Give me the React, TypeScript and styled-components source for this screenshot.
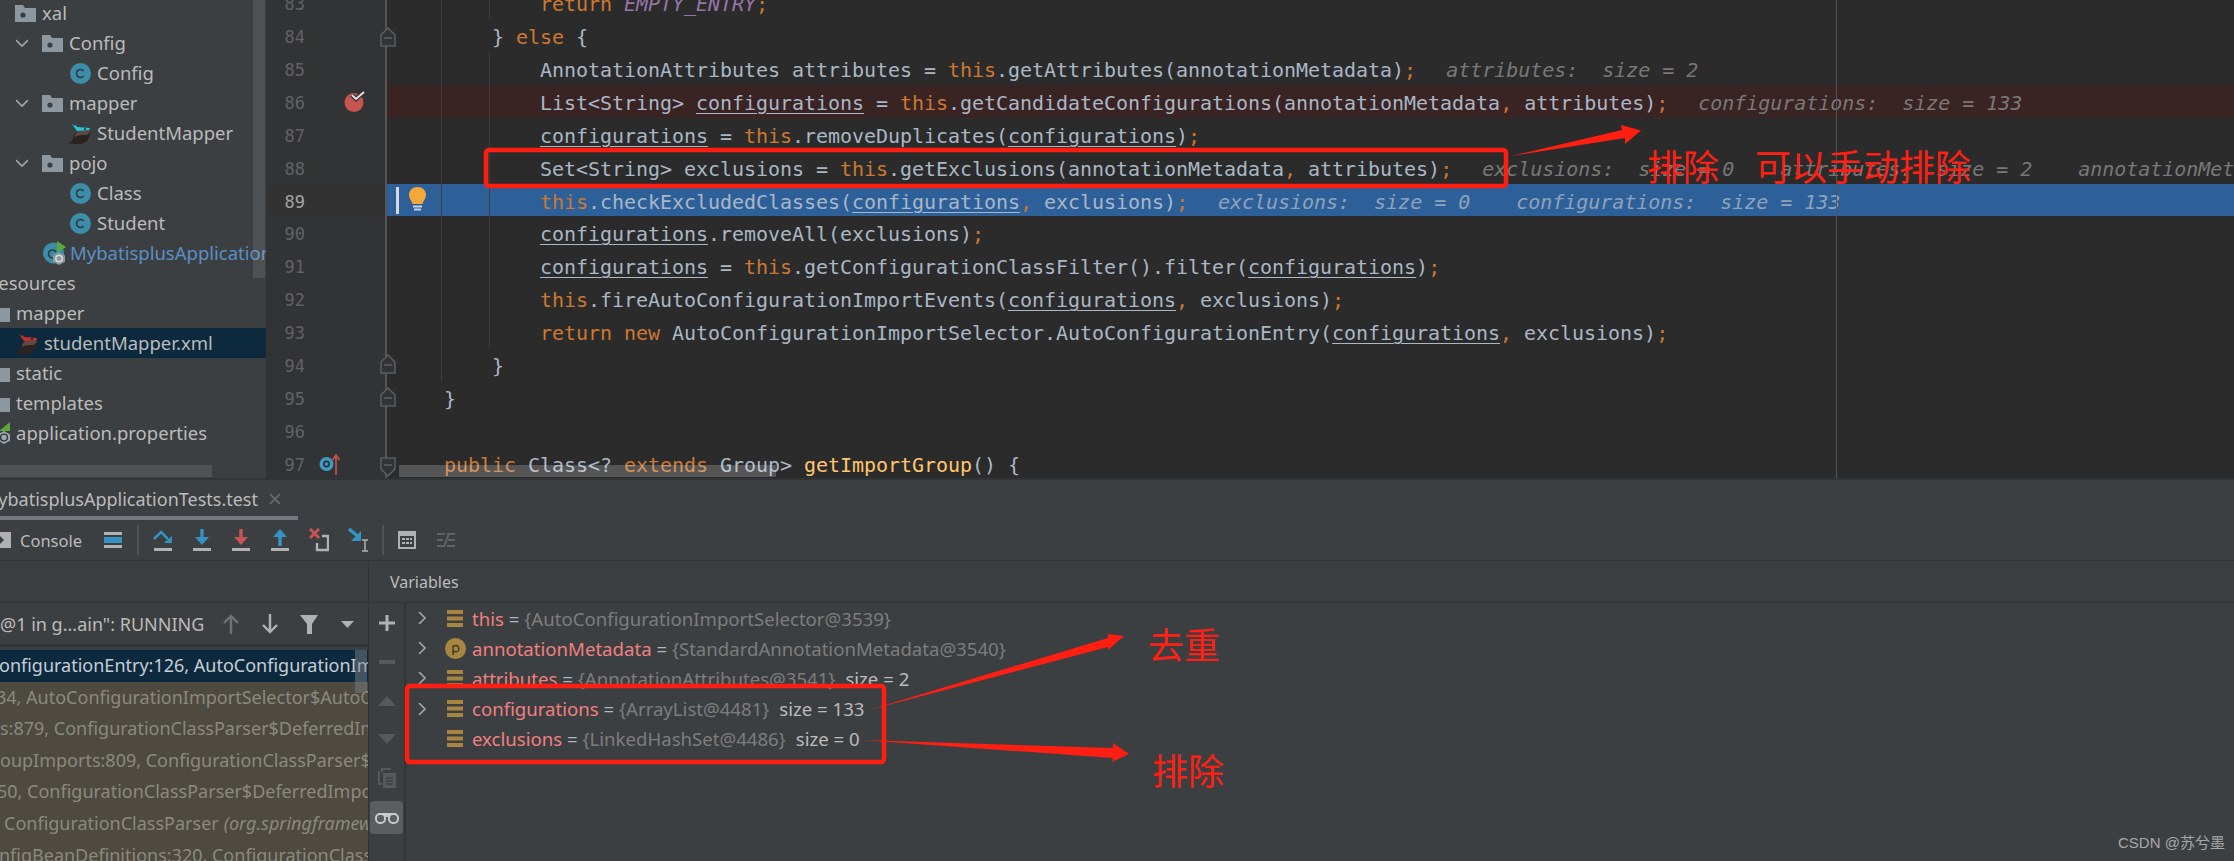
import type { ReactNode } from "react";
import styled, { createGlobalStyle } from "styled-components";

const GlobalStyle = createGlobalStyle`
  html, body {
    margin: 0;
    padding: 0;
    background: #3c3f41;
  }
`;

const UI_FONT = `"Noto Sans", "Noto Sans CJK SC", sans-serif`;
const MONO_FONT = `"DejaVu Sans Mono", "Liberation Mono", monospace`;

const Page = styled.div`
  position: relative;
  width: 2234px;
  height: 861px;
  overflow: hidden;
  display: flex;
  flex-direction: column;
  background: #3c3f41;
  font-family: ${UI_FONT};
`;

const Top = styled.div`
  height: 478px;
  flex: none;
  display: flex;
  overflow: hidden;
`;

/* project tree */
const Sidebar = styled.div`
  position: relative;
  width: 266px;
  flex: none;
  overflow: hidden;
  background: #3c3f41;
`;

const TreeList = styled.div`
  margin-top: -2px;
`;

const TreeRow = styled.div<{ $indent: number; $selected?: boolean }>`
  height: 30px;
  display: flex;
  align-items: center;
  padding-left: ${({ $indent }) => Math.max($indent, 0)}px;
  background: ${({ $selected }) => ($selected ? "#0d293e" : "transparent")};
  white-space: nowrap;
  & > :first-child {
    margin-left: ${({ $indent }) => Math.min($indent, 0)}px;
  }
`;

const ChevronGap = styled.span`
  width: 14px;
  flex: none;
`;

const TreeLabel = styled.span<{ $link?: boolean; $gap?: number }>`
  margin-left: ${({ $gap }) => $gap ?? 6}px;
  font-size: 18.5px;
  line-height: 30px;
  color: ${({ $link }) => ($link ? "#5b8fc4" : "#bbbbbb")};
`;

const VScroll = styled.div`
  position: absolute;
  top: 0;
  right: 1px;
  width: 12px;
  height: 278px;
  background: rgba(255, 255, 255, 0.1);
`;

const HScroll = styled.div`
  position: absolute;
  left: 0;
  top: 465px;
  width: 212px;
  height: 12px;
  background: #505355;
`;

/* editor */
const Editor = styled.div`
  position: relative;
  flex: 1;
  overflow: hidden;
  background: #2b2b2b;
`;

const Lines = styled.div`
  margin-top: -14px;
`;

const Line = styled.div<{ $bg?: string }>`
  height: 32.93px;
  display: flex;
  background: ${({ $bg }) => $bg ?? "transparent"};
`;

const GutterCell = styled.div<{ $current?: boolean }>`
  position: relative;
  width: 121px;
  flex: none;
  box-sizing: border-box;
  padding-right: 80px;
  text-align: right;
  font-family: ${MONO_FONT};
  font-size: 17px;
  line-height: 37px;
  color: ${({ $current }) => ($current ? "#a4a3a3" : "#606366")};
  background: ${({ $current }) => ($current ? "#323232" : "#313335")};
  border-right: 2px solid #555555;
`;

const GutterMark = styled.span<{ $left: number; $top?: number }>`
  position: absolute;
  left: ${({ $left }) => $left}px;
  top: ${({ $top }) => $top ?? 0}px;
  display: flex;
`;

const CodeCell = styled.div<{ $indent: number }>`
  position: relative;
  flex: 1;
  min-width: 0;
  height: 33px;
  padding-left: ${({ $indent }) => 57 + $indent}px;
  font-family: ${MONO_FONT};
  font-size: 20px;
  letter-spacing: -0.04px;
  line-height: 36px;
  white-space: pre;
  color: #a9b7c6;
`;

const Keyword = styled.span`
  color: #cc7832;
`;

const Punct = styled.span`
  color: #cc7832;
`;

const Reassigned = styled.span`
  text-decoration: underline;
  text-underline-offset: 3px;
  text-decoration-thickness: 1px;
`;

const Constant = styled.span`
  color: #9876aa;
  font-style: italic;
`;

const Method = styled.span`
  color: #ffc66d;
`;

const Hint = styled.span<{ $gap?: number; $tone?: string }>`
  margin-left: ${({ $gap }) => $gap ?? 30}px;
  font-style: italic;
  color: ${({ $tone }) => $tone ?? "#787878"};
`;

const Guide = styled.div<{ $left: number; $top: number; $height: number }>`
  position: absolute;
  left: ${({ $left }) => $left}px;
  top: ${({ $top }) => $top}px;
  width: 1px;
  height: ${({ $height }) => $height}px;
  background: #3b3b3b;
`;

const RightMargin = styled.div`
  position: absolute;
  left: 1570px;
  top: 0;
  bottom: 0;
  width: 1px;
  background: #555555;
`;

const CaretBar = styled.div`
  position: absolute;
  left: 9px;
  top: 3px;
  width: 3px;
  height: 27px;
  background: #d8d8d8;
`;

const EditorScroll = styled.div`
  position: absolute;
  left: 133px;
  top: 465px;
  width: 377px;
  height: 12px;
  background: rgba(255, 255, 255, 0.2);
`;

/* debugger */
const Debugger = styled.div`
  flex: 1;
  min-height: 0;
  display: flex;
  flex-direction: column;
  border-top: 2px solid #323537;
`;

const TabBar = styled.div`
  height: 40px;
  flex: none;
  display: flex;
`;

const Tab = styled.div`
  width: 298px;
  box-sizing: border-box;
  display: flex;
  justify-content: flex-end;
  align-items: center;
  gap: 11px;
  padding: 2px 17px 0 0;
  overflow: hidden;
  border-bottom: 4px solid #747a80;
  font-size: 18px;
  color: #bbbbbb;
  white-space: nowrap;
`;

const TabLabel = styled.span`
  flex: none;
`;

const ToolBar = styled.div`
  height: 41px;
  flex: none;
  display: flex;
  align-items: center;
  border-bottom: 1px solid #323537;
  box-sizing: border-box;
`;

const ConsoleLabel = styled.span`
  width: 64px;
  margin: 0 20px 0 9px;
  font-size: 16.5px;
  color: #bbbbbb;
`;

const ToolSep = styled.div<{ $before: number; $after: number }>`
  width: 2px;
  height: 30px;
  margin: 0 ${({ $after }) => $after}px 0 ${({ $before }) => $before}px;
  background: #505355;
`;

const ToolGroup = styled.div`
  display: flex;
  align-items: center;
  gap: 19px;
`;

const Panes = styled.div`
  flex: 1;
  min-height: 0;
  display: flex;
`;

const FramesPane = styled.div`
  width: 369px;
  flex: none;
  box-sizing: border-box;
  border-right: 1px solid #323537;
  display: flex;
  flex-direction: column;
  overflow: hidden;
`;

const PaneHeader = styled.div`
  height: 42px;
  flex: none;
  box-sizing: border-box;
  display: flex;
  align-items: center;
  padding-left: 21px;
  border-bottom: 1px solid #323537;
  font-size: 16px;
  color: #bbbbbb;
`;

const ThreadRow = styled.div`
  position: relative;
  height: 44px;
  flex: none;
  box-sizing: border-box;
  display: flex;
  align-items: center;
  border-bottom: 3px solid #323537;
  font-size: 18px;
  color: #bbbbbb;
  white-space: nowrap;
`;

const ThreadText = styled.span`
  width: 222px;
  flex: none;
  overflow: hidden;
`;

const ThreadIcons = styled.div`
  display: flex;
  align-items: center;
  gap: 21px;
`;

const FrameList = styled.div`
  position: relative;
  flex: 1;
  padding-top: 3px;
  overflow: hidden;
  background: #3c3f41;
`;

const FrameRow = styled.div<{ $selected?: boolean; $shift: number }>`
  height: 31.6px;
  padding-left: ${({ $shift }) => Math.max($shift, 0)}px;
  font-size: 18px;
  line-height: 31px;
  white-space: nowrap;
  overflow: hidden;
  background: ${({ $selected }) => ($selected ? "#0d293e" : "#4e4a3f")};
  color: ${({ $selected }) => ($selected ? "#c5ced6" : "#8b897f")};
  & > span {
    display: inline-block;
    margin-left: ${({ $shift }) => Math.min($shift, 0)}px;
  }
`;

const FrameNote = styled.i`
  margin-left: 5px;
`;

const FrameThumb = styled.div`
  position: absolute;
  right: 1px;
  top: 3px;
  width: 12px;
  height: 43px;
  background: rgba(120, 128, 134, 0.5);
`;

const VariablesPane = styled.div`
  flex: 1;
  min-width: 0;
  display: flex;
  flex-direction: column;
`;

const VariablesBody = styled.div`
  flex: 1;
  min-height: 0;
  display: flex;
`;

const SideBar = styled.div`
  width: 37px;
  flex: none;
  box-sizing: border-box;
  border-right: 2px solid #323537;
  display: flex;
  flex-direction: column;
  align-items: center;
`;

const SideSlot = styled.div<{ $height: number }>`
  height: ${({ $height }) => $height}px;
  display: flex;
  align-items: center;
  justify-content: center;
`;

const GlassesButton = styled.div`
  width: 33px;
  height: 33px;
  margin-top: 3px;
  border-radius: 4px;
  background: #5a5e61;
  display: flex;
  align-items: center;
  justify-content: center;
`;

const VarList = styled.div`
  flex: 1;
  min-width: 0;
`;

const VarRow = styled.div`
  height: 30.2px;
  display: flex;
  align-items: center;
  white-space: pre;
  font-size: 18.6px;
`;

const ChevronSlot = styled.span`
  width: 38px;
  flex: none;
  display: flex;
  padding-left: 10px;
  box-sizing: border-box;
`;

const VarIconSlot = styled.span`
  width: 22px;
  flex: none;
  margin-right: 6px;
  display: flex;
  justify-content: center;
`;

const VarName = styled.span`
  color: #f08080;
`;

const VarEq = styled.span`
  color: #a9b7c6;
`;

const VarValue = styled.span`
  color: #7d7d7d;
`;

const VarSize = styled.span`
  margin-left: 10px;
  color: #bbbbbb;
`;

/* red pen notes on top of the shot */
const Notes = styled.svg`
  position: absolute;
  left: 0;
  top: 0;
  pointer-events: none;
`;

const Note = styled.div<{ $left: number; $top: number }>`
  position: absolute;
  left: ${({ $left }) => $left}px;
  top: ${({ $top }) => $top}px;
  font-family: "Noto Sans CJK SC", sans-serif;
  font-size: 36px;
  line-height: 40px;
  white-space: pre;
  color: #ff2015;
`;

const Watermark = styled.div`
  position: absolute;
  left: 2118px;
  top: 833px;
  font-family: "Liberation Sans", "Noto Sans CJK SC", sans-serif;
  font-size: 15px;
  line-height: 20px;
  color: #a8a8a8;
  white-space: nowrap;
`;

/* icons */
const FolderIcon = () => (
  <svg width="21" height="17" viewBox="0 0 21 17" style={{ flex: "none" }}>
    <path d="M0 0h8l2 3h11v14H0z" fill="#9aa7b0" opacity="0.85" />
    <circle cx="8" cy="10" r="2.6" fill="#3c3f41" />
  </svg>
);

const ClassIcon = () => (
  <svg width="21" height="21" viewBox="0 0 21 21" style={{ flex: "none" }}>
    <circle cx="10.5" cy="10.5" r="10.5" fill="#3d8ca9" />
    <path d="M13.6 8a4 4 0 1 0 0 5" fill="none" stroke="#2b3b42" strokeWidth="1.6" />
  </svg>
);

const RunnableClassIcon = () => (
  <svg width="23" height="24" viewBox="0 0 23 24" style={{ flex: "none" }}>
    <circle cx="10.5" cy="12" r="10.5" fill="#3d8ca9" />
    <path d="M13 11a4 4 0 1 0 0 4" fill="none" stroke="#2b3b42" strokeWidth="1.6" />
    <path d="M14 0l9 6-9 6z" fill="#5aa83c" />
    <path d="M16 11l6 3.4v6.4L16 24l-6-3.2v-6.4z" fill="#8f9aa3" />
    <circle cx="16" cy="17.6" r="3.2" fill="none" stroke="#dfe3e6" strokeWidth="1.3" />
  </svg>
);

const PropertiesIcon = () => (
  <svg width="22" height="22" viewBox="-11 0 22 22" style={{ flex: "none" }}>
    <path d="M11 0v9H0z" fill="#5aa83c" />
    <path d="M5 9l6 3.4v6.4L5 22l-6-3.2v-6.4z" fill="#9aa7b0" />
    <circle cx="5" cy="15.5" r="3.4" fill="none" stroke="#33373a" strokeWidth="1.4" />
  </svg>
);

const BirdIcon = ({ accent }: { accent: string }) => (
  <svg width="23" height="21" viewBox="0 0 23 21" style={{ flex: "none" }}>
    <path d="M0 20c3-1 4-2 5-5 1-5 5-9 10-9h7c1 8-3 15-10 15-4 0-9 0-12-1z" fill="#2c2321" />
    <path d="M7 14c0-4 3-7 8-8h7c0 4-2 6-6 6-3 0-6 0-9 2z" fill="#5d4a46" />
    <path d="M4 1l3 2 1-1 1 2 13 1-1 2-12 1z" fill={accent} />
    <circle cx="17" cy="6" r="1" fill="#20282c" />
  </svg>
);

const Chevron = ({ open }: { open?: boolean }) => (
  <svg width="12" height="12" viewBox="0 0 12 12" style={{ flex: "none" }}>
    <path
      d={open ? "M0 3l6 6 6-6" : "M3 0l6 6-6 6"}
      fill="none"
      stroke="#a3a5a7"
      strokeWidth="1.6"
    />
  </svg>
);

const Breakpoint = () => (
  <svg width="21" height="21" viewBox="0 0 21 21">
    <circle cx="10" cy="11.5" r="9.5" fill="#c75450" />
    <path d="M8 4l4 4 8-7" fill="none" stroke="#2f3133" strokeWidth="4.5" />
    <path d="M8 4l4 4 8-7" fill="none" stroke="#dfe1e5" strokeWidth="2" />
  </svg>
);

const FoldOpen = () => (
  <svg width="16" height="20" viewBox="0 0 16 20">
    <path d="M1 8l7-7 7 7v11H1z" fill="#313335" stroke="#5a5d5f" strokeWidth="1.6" />
    <path d="M4 11h8" stroke="#5a5d5f" strokeWidth="1.6" />
  </svg>
);

const FoldClose = () => (
  <svg width="16" height="20" viewBox="0 0 16 20">
    <path d="M1 1h14v11l-7 7-7-7z" fill="#313335" stroke="#5a5d5f" strokeWidth="1.6" />
    <path d="M4 8h8" stroke="#5a5d5f" strokeWidth="1.6" />
  </svg>
);

const ImplementsMark = () => (
  <svg width="22" height="22" viewBox="0 0 22 22">
    <circle cx="7.5" cy="11" r="7" fill="#3d9ac0" />
    <circle cx="7.5" cy="11" r="2.6" fill="none" stroke="#26343b" strokeWidth="1.6" />
    <path d="M17 22V3M13.5 7L17 2l3.5 5" fill="none" stroke="#c75450" strokeWidth="1.6" />
  </svg>
);

const Bulb = () => (
  <svg width="17" height="25" viewBox="0 0 17 25">
    <path d="M8.5 0C3.5 0 0 3.4 0 8c0 3.5 2.6 5.4 3.5 9h10c.9-3.6 3.5-5.5 3.5-9 0-4.6-3.5-8-8.5-8z" fill="#f2a93a" />
    <path d="M4 19.5h9M5 22.5h7" stroke="#c9d2da" strokeWidth="1.8" />
  </svg>
);

const ToolIcon = ({ children, width = 20, dim }: { children: ReactNode; width?: number; dim?: boolean }) => (
  <svg width={width} height="24" viewBox={`0 0 ${width} 24`} style={{ flex: "none", opacity: dim ? 0.45 : 1 }}>
    {children}
  </svg>
);

const BLUE = "#3592c4";
const RED = "#c75450";
const GREY = "#afb1b3";

const DebugTools = () => (
  <ToolGroup>
    <ToolIcon>
      <path d="M1 11l7-7 7 7" fill="none" stroke={BLUE} strokeWidth="2.6" />
      <path d="M11 15l8-7v7z" fill={BLUE} />
      <rect x="1" y="20" width="18" height="3" fill={GREY} />
    </ToolIcon>
    <ToolIcon>
      <path d="M10 1v10" stroke={BLUE} strokeWidth="3.4" />
      <path d="M3 9h14l-7 8z" fill={BLUE} />
      <rect x="1" y="20" width="18" height="3" fill={GREY} />
    </ToolIcon>
    <ToolIcon>
      <path d="M10 1v10" stroke={RED} strokeWidth="3.4" />
      <path d="M3 9h14l-7 8z" fill={RED} />
      <rect x="1" y="20" width="18" height="3" fill={GREY} />
    </ToolIcon>
    <ToolIcon>
      <path d="M3 9l7-8 7 8z" fill={BLUE} />
      <path d="M10 8v10" stroke={BLUE} strokeWidth="3.4" />
      <rect x="1" y="20" width="18" height="3" fill={GREY} />
    </ToolIcon>
    <ToolIcon>
      <path d="M1 1l9 9M10 1l-9 9" stroke={RED} strokeWidth="3" />
      <path d="M13 8h6v14H8v-7" fill="none" stroke={GREY} strokeWidth="2.4" />
    </ToolIcon>
    <ToolIcon width={21}>
      <path d="M1 1l11 9" stroke={BLUE} strokeWidth="3.4" />
      <path d="M13 3v10H3z" fill={BLUE} />
      <path d="M14 12h6M14 23h6M17 12v11" stroke={GREY} strokeWidth="1.5" fill="none" />
    </ToolIcon>
  </ToolGroup>
);

const rows = [
  { n: 83, indent: 96, code: <><Keyword>return</Keyword> <Constant>EMPTY_ENTRY</Constant><Punct>;</Punct></> },
  { n: 84, indent: 48, code: <>{"} "}<Keyword>else</Keyword>{" {"}</>, mark: <GutterMark $left={114} $top={8}><FoldOpen /></GutterMark> },
  {
    n: 85,
    indent: 96,
    code: <>AnnotationAttributes attributes = <Keyword>this</Keyword>.getAttributes(annotationMetadata)<Punct>;</Punct><Hint>attributes:  size = 2</Hint></>,
  },
  {
    n: 86,
    indent: 96,
    bg: "#3a2323",
    mark: <GutterMark $left={78} $top={6}><Breakpoint /></GutterMark>,
    code: <>List&lt;String&gt; <Reassigned>configurations</Reassigned> = <Keyword>this</Keyword>.getCandidateConfigurations(annotationMetadata<Punct>,</Punct> attributes)<Punct>;</Punct><Hint>configurations:  size = 133</Hint></>,
  },
  {
    n: 87,
    indent: 96,
    code: <><Reassigned>configurations</Reassigned> = <Keyword>this</Keyword>.removeDuplicates(<Reassigned>configurations</Reassigned>)<Punct>;</Punct></>,
  },
  {
    n: 88,
    indent: 96,
    code: <>Set&lt;String&gt; exclusions = <Keyword>this</Keyword>.getExclusions(annotationMetadata<Punct>,</Punct> attributes)<Punct>;</Punct><Hint>exclusions:  size = 0</Hint><Hint $gap={46}>attributes:  size = 2</Hint><Hint $gap={46}>annotationMetadata: StandardAnnotationMetadata@3540</Hint></>,
  },
  {
    n: 89,
    indent: 96,
    bg: "#2d6099",
    current: true,
    code: <><Keyword>this</Keyword>.checkExcludedClasses(<Reassigned>configurations</Reassigned><Punct>,</Punct> exclusions)<Punct>;</Punct><Hint $tone="#8ea3bb">exclusions:  size = 0</Hint><Hint $gap={46} $tone="#8ea3bb">configurations:  size = 133</Hint></>,
  },
  { n: 90, indent: 96, code: <><Reassigned>configurations</Reassigned>.removeAll(exclusions)<Punct>;</Punct></> },
  {
    n: 91,
    indent: 96,
    code: <><Reassigned>configurations</Reassigned> = <Keyword>this</Keyword>.getConfigurationClassFilter().filter(<Reassigned>configurations</Reassigned>)<Punct>;</Punct></>,
  },
  {
    n: 92,
    indent: 96,
    code: <><Keyword>this</Keyword>.fireAutoConfigurationImportEvents(<Reassigned>configurations</Reassigned><Punct>,</Punct> exclusions)<Punct>;</Punct></>,
  },
  {
    n: 93,
    indent: 96,
    code: <><Keyword>return new</Keyword> AutoConfigurationImportSelector.AutoConfigurationEntry(<Reassigned>configurations</Reassigned><Punct>,</Punct> exclusions)<Punct>;</Punct></>,
  },
  { n: 94, indent: 48, code: <>{"}"}</>, mark: <GutterMark $left={114} $top={6}><FoldOpen /></GutterMark> },
  { n: 95, indent: 0, code: <>{"}"}</>, mark: <GutterMark $left={114} $top={6}><FoldOpen /></GutterMark> },
  { n: 96, indent: 0, code: <></> },
  {
    n: 97,
    indent: 0,
    mark: (
      <>
        <GutterMark $left={53} $top={6}><ImplementsMark /></GutterMark>
        <GutterMark $left={114} $top={10}><FoldClose /></GutterMark>
      </>
    ),
    code: <><Keyword>public</Keyword> Class&lt;? <Keyword>extends</Keyword> Group&gt; <Method>getImportGroup</Method>() {"{"}</>,
  },
];

const frames = [
  { text: "onfigurationEntry:126, AutoConfigurationImportSelector", shift: -1, selected: true },
  { text: "34, AutoConfigurationImportSelector$AutoConfigurationGroup", shift: -4 },
  { text: "s:879, ConfigurationClassParser$DeferredImportSelectorGrouping", shift: 0 },
  { text: "oupImports:809, ConfigurationClassParser$DeferredImportSelector", shift: 0 },
  { text: "50, ConfigurationClassParser$DeferredImportSelectorHandler", shift: -3 },
  { text: "ConfigurationClassParser", note: "(org.springframework.context)", shift: 4 },
  { text: "nfigBeanDefinitions:320, ConfigurationClassParser", shift: -1 },
];

const FieldIcon = () => (
  <svg width="16" height="17" viewBox="0 0 16 17">
    <path d="M0 0h16v4H0zM0 6.5h16v4H0zM0 13h16v4H0z" fill="#a9863f" />
  </svg>
);

const ParamIcon = () => (
  <svg width="21" height="21" viewBox="0 0 21 21">
    <circle cx="10.5" cy="10.5" r="10.5" fill="#a9863f" />
    <path d="M8 17V7.5M8 9a3.2 3.2 0 1 1 0 3.4" fill="none" stroke="#37322a" strokeWidth="1.3" />
  </svg>
);

const variables = [
  { name: "this", value: "{AutoConfigurationImportSelector@3539}", icon: <FieldIcon />, more: true },
  { name: "annotationMetadata", value: "{StandardAnnotationMetadata@3540}", icon: <ParamIcon />, more: true },
  { name: "attributes", value: "{AnnotationAttributes@3541}", size: "size = 2", icon: <FieldIcon />, more: true },
  { name: "configurations", value: "{ArrayList@4481}", size: "size = 133", icon: <FieldIcon />, more: true },
  { name: "exclusions", value: "{LinkedHashSet@4486}", size: "size = 0", icon: <FieldIcon /> },
];

export default function App() {
  return (
    <Page>
      <GlobalStyle />
      <Top>
        <Sidebar>
          <TreeList>
            <TreeRow $indent={15}><FolderIcon /><TreeLabel>xal</TreeLabel></TreeRow>
            <TreeRow $indent={16}><Chevron open /><ChevronGap /><FolderIcon /><TreeLabel>Config</TreeLabel></TreeRow>
            <TreeRow $indent={70}><ClassIcon /><TreeLabel>Config</TreeLabel></TreeRow>
            <TreeRow $indent={16}><Chevron open /><ChevronGap /><FolderIcon /><TreeLabel>mapper</TreeLabel></TreeRow>
            <TreeRow $indent={68}><BirdIcon accent="#25c8d8" /><TreeLabel>StudentMapper</TreeLabel></TreeRow>
            <TreeRow $indent={16}><Chevron open /><ChevronGap /><FolderIcon /><TreeLabel>pojo</TreeLabel></TreeRow>
            <TreeRow $indent={70}><ClassIcon /><TreeLabel>Class</TreeLabel></TreeRow>
            <TreeRow $indent={70}><ClassIcon /><TreeLabel>Student</TreeLabel></TreeRow>
            <TreeRow $indent={43}><RunnableClassIcon /><TreeLabel $link $gap={4}>MybatisplusApplicationTests</TreeLabel></TreeRow>
            <TreeRow $indent={-9}><TreeLabel $gap={0}>resources</TreeLabel></TreeRow>
            <TreeRow $indent={-11}><FolderIcon /><TreeLabel>mapper</TreeLabel></TreeRow>
            <TreeRow $indent={15} $selected><BirdIcon accent="#c9302c" /><TreeLabel>studentMapper.xml</TreeLabel></TreeRow>
            <TreeRow $indent={-11}><FolderIcon /><TreeLabel>static</TreeLabel></TreeRow>
            <TreeRow $indent={-11}><FolderIcon /><TreeLabel>templates</TreeLabel></TreeRow>
            <TreeRow $indent={-12}><PropertiesIcon /><TreeLabel>application.properties</TreeLabel></TreeRow>
          </TreeList>
          <VScroll />
          <HScroll />
        </Sidebar>
        <Editor>
          <Lines>
            {rows.map((row) => (
              <Line key={row.n} $bg={row.bg}>
                <GutterCell $current={row.current}>
                  {row.n}
                  {row.mark}
                </GutterCell>
                <CodeCell $indent={row.indent}>
                  {row.current && (
                    <>
                      <CaretBar />
                      <GutterMark $left={22} $top={3}><Bulb /></GutterMark>
                    </>
                  )}
                  {row.code}
                </CodeCell>
              </Line>
            ))}
          </Lines>
          <Guide $left={175} $top={0} $height={382} />
          <Guide $left={223} $top={0} $height={19} />
          <Guide $left={223} $top={52} $height={296} />
          <RightMargin />
          <EditorScroll />
        </Editor>
      </Top>
      <Debugger>
        <TabBar>
          <Tab>
            <TabLabel>MybatisplusApplicationTests.test</TabLabel>
            <svg width="12" height="12" viewBox="0 0 12 12" style={{ flex: "none" }}>
              <path d="M1 1l10 10M11 1L1 11" stroke="#6e7275" strokeWidth="1.5" />
            </svg>
          </Tab>
        </TabBar>
        <ToolBar>
          <svg width="11" height="16" viewBox="0 0 11 16" style={{ flex: "none" }}>
            <path d="M0 0h11v16H0z" fill="#afb1b3" />
            <path d="M0 4l4 4-4 4z" fill="#3c3f41" />
          </svg>
          <ConsoleLabel>Console</ConsoleLabel>
          <svg width="18" height="16" viewBox="0 0 18 16" style={{ flex: "none" }}>
            <rect y="0" width="18" height="3" fill="#afb1b3" />
            <rect y="5" width="18" height="6" fill={BLUE} />
            <rect y="13" width="18" height="3" fill="#afb1b3" />
          </svg>
          <ToolSep $before={15} $after={14} />
          <DebugTools />
          <ToolSep $before={13} $after={14} />
          <svg width="18" height="18" viewBox="0 0 18 18" style={{ flex: "none" }}>
            <path fillRule="evenodd" d="M0 0h18v18H0zM2 5v11h14V5z" fill="#afb1b3" />
            <path d="M4 7h3v2H4zM8 7h3v2H8zM12 7h2v2h-2zM4 11h3v2H4zM8 11h3v2H8zM12 11h2v2h-2z" fill="#afb1b3" />
          </svg>
          <svg width="18" height="16" viewBox="0 0 18 16" style={{ flex: "none", marginLeft: 21 }}>
            <path d="M0 2h8M0 8h6M0 14h8M10 2h8M11 8h7M10 14h8M12 1L7 15" stroke="#5f6366" strokeWidth="2" fill="none" />
          </svg>
        </ToolBar>
        <Panes>
          <FramesPane>
            <PaneHeader />
            <ThreadRow>
              <ThreadText>@1 in g...ain": RUNNING</ThreadText>
              <ThreadIcons>
                <ToolIcon width={18} dim>
                  <path d="M9 22V4M2 11l7-7 7 7" fill="none" stroke={GREY} strokeWidth="2.4" />
                </ToolIcon>
                <ToolIcon width={18}>
                  <path d="M9 2v18M2 13l7 7 7-7" fill="none" stroke={GREY} strokeWidth="2.4" />
                </ToolIcon>
                <ToolIcon width={18}>
                  <path d="M0 3h18l-6 9v10H7V12z" fill={GREY} />
                </ToolIcon>
                <ToolIcon width={16}>
                  <path d="M2 9h13l-6.5 7z" fill={GREY} />
                </ToolIcon>
              </ThreadIcons>
            </ThreadRow>
            <FrameList>
              {frames.map((frame) => (
                <FrameRow key={frame.text} $selected={frame.selected} $shift={frame.shift}>
                  <span>{frame.text}</span>
                  {frame.note && <FrameNote>{frame.note}</FrameNote>}
                </FrameRow>
              ))}
              <FrameThumb />
            </FrameList>
          </FramesPane>
          <VariablesPane>
            <PaneHeader>Variables</PaneHeader>
            <VariablesBody>
              <SideBar>
                <SideSlot $height={39}>
                  <svg width="18" height="18" viewBox="0 0 18 18">
                    <path d="M9 1v16M1 9h16" stroke={GREY} strokeWidth="3" />
                  </svg>
                </SideSlot>
                <SideSlot $height={39}>
                  <svg width="16" height="4" viewBox="0 0 16 4"><rect width="16" height="4" fill="#55595c" /></svg>
                </SideSlot>
                <SideSlot $height={39}>
                  <svg width="18" height="10" viewBox="0 0 18 10"><path d="M0 10L9 0l9 10z" fill="#55595c" /></svg>
                </SideSlot>
                <SideSlot $height={38}>
                  <svg width="18" height="10" viewBox="0 0 18 10"><path d="M0 0h18L9 10z" fill="#55595c" /></svg>
                </SideSlot>
                <SideSlot $height={40}>
                  <svg width="18" height="20" viewBox="0 0 18 20">
                    <path d="M4 4V1h9M1 3v13h3" fill="none" stroke="#55595c" strokeWidth="2" />
                    <path d="M5 5h13v15H5z" fill="#55595c" />
                    <path d="M8 10h7M8 13h7M8 16h7" stroke="#3c3f41" strokeWidth="1.3" />
                  </svg>
                </SideSlot>
                <GlassesButton>
                  <svg width="24" height="12" viewBox="0 0 24 12">
                    <rect x="1" y="2" width="9" height="9" rx="4" fill="none" stroke="#c8cacc" strokeWidth="2" />
                    <rect x="14" y="2" width="9" height="9" rx="4" fill="none" stroke="#c8cacc" strokeWidth="2" />
                    <path d="M3 2h18M10 4h4" stroke="#c8cacc" strokeWidth="2" />
                  </svg>
                </GlassesButton>
              </SideBar>
              <VarList>
                {variables.map((item) => (
                  <VarRow key={item.name}>
                    <ChevronSlot>{item.more && <Chevron />}</ChevronSlot>
                    <VarIconSlot>{item.icon}</VarIconSlot>
                    <VarName>{item.name}</VarName>
                    <VarEq> = </VarEq>
                    <VarValue>{item.value}</VarValue>
                    {item.size && <VarSize>{item.size}</VarSize>}
                  </VarRow>
                ))}
              </VarList>
            </VariablesBody>
          </VariablesPane>
        </Panes>
      </Debugger>

      <Notes width="2234" height="861" viewBox="0 0 2234 861">
        <rect x="486" y="150" width="1020" height="36" rx="3" fill="none" stroke="#ff1e12" strokeWidth="4.5" />
        <rect x="407" y="686" width="477" height="76" rx="3" fill="none" stroke="#ff1e12" strokeWidth="4.5" />
        <path d="M1511 156L1622 130L1621 125L1641 130.5L1625 144L1625 138Z" fill="#ff1e12" />
        <path d="M869 710L1108 638L1108 634L1124 636L1108 650L1108 647Z" fill="#ff1e12" />
        <path d="M861 740L1113 748L1113 743L1129 754L1112 762L1113 758Z" fill="#ff1e12" />
      </Notes>
      <Note $left={1647} $top={145}>排除　可以手动排除</Note>
      <Note $left={1148} $top={623}>去重</Note>
      <Note $left={1152} $top={749}>排除</Note>
      <Watermark>CSDN @苏兮墨</Watermark>
    </Page>
  );
}
